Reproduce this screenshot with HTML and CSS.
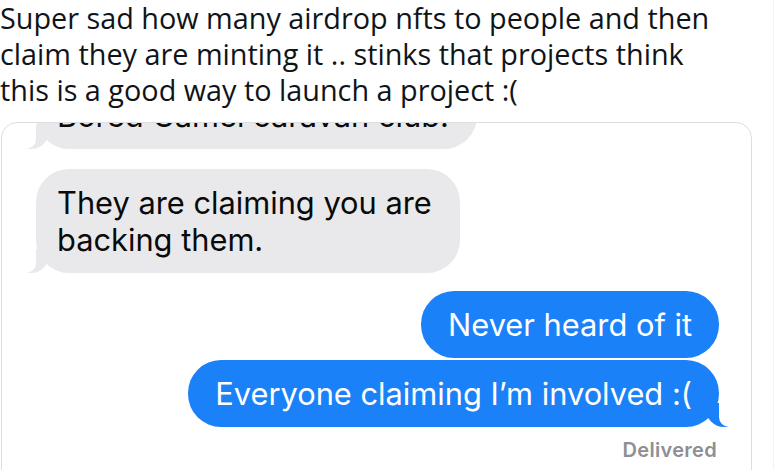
FILE: index.html
```html
<!DOCTYPE html>
<html lang="en">
<head>
    <meta charset="UTF-8">
    <meta name="viewport" content="width=device-width, initial-scale=1.0">
    <title>Tweet</title>
    <link rel="stylesheet" href="styles.css">
</head>
<body>
    <div class="tweet">
        <p class="tweet-text">Super sad how many airdrop nfts to people and then<br>claim they are minting it .. stinks that projects think<br>this is a good way to launch a project :(</p>

        <div class="media">
            <div class="thread">
                <div class="bubble them first">Bored Camel caravan club.</div>
                <div class="bubble them">They are claiming you are<br>backing them.</div>
                <div class="bubble me">Never heard of it</div>
                <div class="bubble me last">Everyone claiming I&#8217;m involved :(</div>
                <div class="status">Delivered</div>
            </div>
        </div>
    </div>
</body>
</html>
```

FILE: styles.css
```css
body {
    margin: 0;
    background: #fff;
}
.tweet {
    width: 773px;
    height: 470px;
    overflow: hidden;
    border-right: 1px solid #f1f3f4;
}
.tweet-text {
    margin: 0 0 14px 0;
    font-family: "Open Sans", "Noto Sans", sans-serif;
    font-size: 28.8px;
    line-height: 36px;
    color: #0f1419;
    white-space: nowrap;
}
.media {
    margin-left: 1px;
    width: 749px;
    height: 400px;
    border: 1px solid #dadfe2;
    border-radius: 16px;
    overflow: hidden;
}
.thread {
    display: flex;
    flex-direction: column;
    font-family: Inter, "Liberation Sans", sans-serif;
    font-size: 30.8px;
    line-height: 37px;
}
.bubble {
    position: relative;
    padding: 15px 27px;
    border-radius: 33px;
}
.them {
    align-self: flex-start;
    margin-left: 34px;
    padding-left: 21px;
    padding-right: 28px;
    background: #e9e9eb;
    color: #0a0a0a;
}
.them.first {
    margin-top: -41px;
}
.them + .them {
    margin-top: 20px;
}
.me {
    align-self: flex-end;
    margin-right: 32px;
    background: #1b81f8;
    color: #fff;
}
.them + .me {
    margin-top: 18px;
}
.me + .me {
    margin-top: 2px;
}

/* bubble tails */
.them::before,
.last::before {
    content: "";
    position: absolute;
    bottom: 0;
    width: 22px;
    height: 24px;
}
.them::after,
.last::after {
    content: "";
    position: absolute;
    bottom: 0;
    width: 12px;
    height: 24px;
    background: #fff;
}
.them::before {
    left: -9px;
    background: #e9e9eb;
    border-bottom-right-radius: 18px;
}
.them::after {
    left: -12px;
    border-bottom-right-radius: 10px;
}
.last::before {
    right: -9px;
    background: #1b81f8;
    border-bottom-left-radius: 18px;
}
.last::after {
    right: -12px;
    border-bottom-left-radius: 10px;
}

.status {
    align-self: flex-end;
    margin: 12px 34px 0 0;
    font-size: 20px;
    line-height: 22px;
    font-weight: 600;
    letter-spacing: 0.3px;
    color: #8e8e93;
}
```
